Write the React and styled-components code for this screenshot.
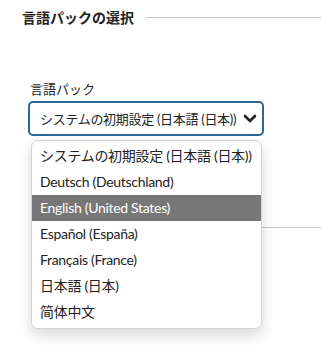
import styled, { createGlobalStyle } from 'styled-components';

const languages = [
  'システムの初期設定 (日本語 (日本))',
  'Deutsch (Deutschland)',
  'English (United States)',
  'Español (España)',
  'Français (France)',
  '日本語 (日本)',
  '简体中文',
];

export default function App() {
  return (
    <>
      <GlobalStyle />
      <Page>
        <Legend>
          <LegendText>言語パックの選択</LegendText>
          <LegendLine />
        </Legend>

        <Field>
          <Label>言語パック</Label>
          <SelectWrap>
            <SelectBox>
              <SelectValue>{languages[0]}</SelectValue>
              <Chevron width="14" height="10" viewBox="0 0 14 10">
                <polyline points="2,2 7,7 12,2" />
              </Chevron>
            </SelectBox>

            <Dropdown>
              {languages.map((lang, i) => (
                <Option key={lang} selected={i === 2}>
                  {lang}
                </Option>
              ))}
            </Dropdown>
          </SelectWrap>
        </Field>

        <Divider />
      </Page>
    </>
  );
}

// Styled Components
const GlobalStyle = createGlobalStyle`
  body {
    margin: 0;
    background: #ffffff;
    font-family: "Lato", "Noto Sans CJK JP", sans-serif;
    color: #222;
  }
`;

const Page = styled.div`
  width: 321px;
  height: 355px;
  overflow: hidden;
  padding-top: 7px;
  box-sizing: border-box;
`;

const Legend = styled.div`
  display: flex;
  align-items: center;
  padding-left: 22px;
  gap: 12px;
`;

const LegendText = styled.span`
  font-size: 14px;
  font-weight: 700;
  line-height: 20px;
  font-family: "Noto Sans CJK JP", sans-serif;
`;

const LegendLine = styled.div`
  flex: 1;
  height: 1px;
  background: #c8c8c8;
  box-shadow: 0 2px 2px rgba(0, 0, 0, 0.03);
`;

const Field = styled.div`
  padding-left: 28px;
  margin-top: 53px;
  display: flex;
  flex-direction: column;
`;

const Label = styled.label`
  font-size: 13px;
  line-height: 18px;
  margin-left: 2px;
  margin-bottom: 3px;
  font-family: "Noto Sans CJK JP", sans-serif;
`;

const SelectWrap = styled.div`
  position: relative;
  width: 236px;
`;

const SelectBox = styled.div`
  height: 35px;
  box-sizing: border-box;
  border: 2px solid #2c6597;
  border-radius: 5px;
  display: flex;
  align-items: center;
  justify-content: space-between;
  padding: 0 5px 0 10px;
  background: #fff;
`;

const SelectValue = styled.span`
  font-size: 13px;
  white-space: nowrap;
  letter-spacing: -0.3px;
`;

const Chevron = styled.svg`
  fill: none;
  stroke: #222;
  stroke-width: 2.6;
  stroke-linecap: round;
  stroke-linejoin: round;
`;

const Dropdown = styled.div`
  position: absolute;
  top: 39px;
  left: 3px;
  width: 231px;
  box-sizing: border-box;
  padding: 2px 0 3px;
  background: #fff;
  border: 1px solid #d4d4d4;
  border-radius: 7px;
  box-shadow: 0 6px 14px rgba(0, 0, 0, 0.16);
  z-index: 2;
`;

const Option = styled.div`
  height: 26px;
  line-height: 26px;
  padding-left: 8px;
  font-size: 14px;
  letter-spacing: -0.3px;
  white-space: nowrap;
  background: ${({ selected }) => (selected ? '#777777' : 'transparent')};
  color: ${({ selected }) => (selected ? '#ffffff' : '#222')};
`;

const Divider = styled.div`
  margin: 91px 0 0 145px;
  height: 1px;
  background: #c8c8c8;
`;
